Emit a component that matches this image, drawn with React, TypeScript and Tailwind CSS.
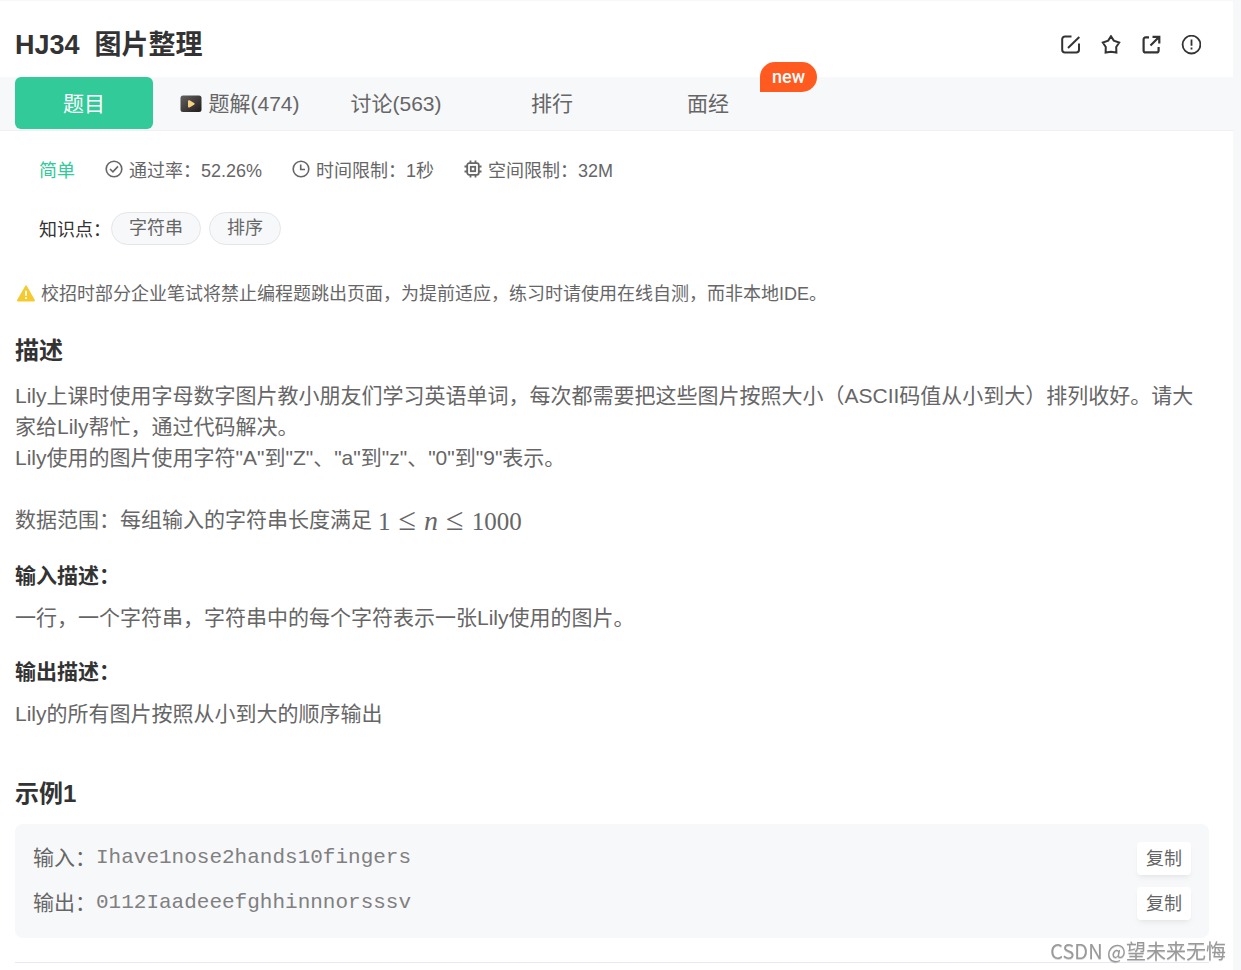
import React, { useState } from 'react';

const tabs = [
  { id: 'question', label: '题目' },
  { id: 'solution', label: '题解(474)', video: true },
  { id: 'discuss', label: '讨论(563)' },
  { id: 'rank', label: '排行' },
  { id: 'interview', label: '面经', badge: 'new' },
];

const samples = [
  { label: '输入：', value: 'Ihave1nose2hands10fingers' },
  { label: '输出：', value: '0112Iaadeeefghhinnnorsssv' },
];

const tags = ['字符串', '排序'];

function EditIcon() {
  return (
    <svg viewBox="0 0 20 20" className="size-5" fill="none" stroke="currentColor" strokeWidth="2">
      <path d="M10.5 1.5H4A2.8 2.8 0 0 0 1.2 4.3V14.7A2.8 2.8 0 0 0 4 17.5H15.2A2.8 2.8 0 0 0 18 14.7V8.5" />
      <path d="M7 13L18.3 2" />
    </svg>
  );
}

function StarIcon() {
  return (
    <svg viewBox="0 0 20 20" className="size-5" fill="none" stroke="currentColor" strokeWidth="2">
      <path d="M10 1.2L12.8 5.6L18.2 7.5L15.2 12L15.4 17.6L10 16.7L4.6 17.6L4.8 12L1.8 7.5L7.2 5.6Z" />
    </svg>
  );
}

function ShareIcon() {
  return (
    <svg viewBox="0 0 20 20" className="size-5" fill="none" stroke="currentColor" strokeWidth="2.2">
      <path d="M8 2.4H4.6A2 2 0 0 0 2.6 4.4V15.4A2 2 0 0 0 4.6 17.4H15.6A2 2 0 0 0 17.6 15.4V12" />
      <path d="M11.5 1.8H18.3V8.6M18 2L9.5 10.5" />
    </svg>
  );
}

function WarnCircleIcon() {
  return (
    <svg viewBox="0 0 20 20" className="size-5" fill="none" stroke="currentColor" strokeWidth="1.8">
      <circle cx="10.5" cy="9.6" r="8.9" />
      <path d="M10.5 4.6V10.8M10.5 12.6V14.4" />
    </svg>
  );
}

function VideoIcon() {
  return (
    <svg viewBox="0 0 22 18" className="w-[22px] h-[18px]">
      <defs>
        <linearGradient id="video" x1="0" y1="0" x2="1" y2="1">
          <stop offset="0" stopColor="#646260" />
          <stop offset="1" stopColor="#1f1b1a" />
        </linearGradient>
      </defs>
      <rect x="0.5" y="0.5" width="21" height="16.5" rx="2.5" fill="url(#video)" />
      <path d="M8 6.2a1 1 0 0 1 1.5-.9l4.6 2.7a1 1 0 0 1 0 1.7l-4.6 2.7a1 1 0 0 1-1.5-.9z" fill="#f8cf83" />
    </svg>
  );
}

function PassIcon() {
  return (
    <svg viewBox="0 0 18 18" className="size-[18px]" fill="none" stroke="currentColor" strokeWidth="1.6">
      <circle cx="9" cy="9" r="7.8" />
      <path d="M5 9L7.9 11.8L13 6.4" />
    </svg>
  );
}

function ClockIcon() {
  return (
    <svg viewBox="0 0 18 18" className="size-[18px]" fill="none" stroke="currentColor" strokeWidth="1.6">
      <circle cx="9" cy="9" r="7.8" />
      <path d="M8.7 4.5V9.5H13" />
    </svg>
  );
}

function ChipIcon() {
  return (
    <svg viewBox="0 0 18 18" className="size-[18px]" fill="none" stroke="currentColor" strokeWidth="1.8">
      <rect x="3.2" y="3.2" width="11.6" height="11.6" rx="2" />
      <rect x="6.8" y="6.8" width="4.4" height="4.4" />
      <path d="M6.5 0.5V3M11.5 0.5V3M6.5 15V17.5M11.5 15V17.5M0.5 6.5H3M0.5 11.5H3M15 6.5H17.5M15 11.5H17.5" />
    </svg>
  );
}

function TipIcon() {
  return (
    <svg viewBox="0 0 20 18" className="w-5 h-[18px]">
      <path d="M10.2 1a1 1 0 0 1 1.7 0L19.8 15a1 1 0 0 1-.9 1.5H3a1 1 0 0 1-.9-1.5z" fill="#f5ca2f" />
      <path d="M11 5.8V10.8M11 12.2V14" stroke="#fff" strokeWidth="1.8" />
    </svg>
  );
}

const actions = [
  { label: '笔记', Icon: EditIcon },
  { label: '收藏', Icon: StarIcon },
  { label: '分享', Icon: ShareIcon },
  { label: '反馈', Icon: WarnCircleIcon },
];

const metas = [
  { text: '通过率：52.26%', Icon: PassIcon },
  { text: '时间限制：1秒', Icon: ClockIcon },
  { text: '空间限制：32M', Icon: ChipIcon },
];

export default function App() {
  const [activeTab, setActiveTab] = useState('question');

  const copy = (value: string) => {
    navigator.clipboard?.writeText(value).catch(() => {});
  };

  return (
    <div className="min-h-screen bg-[#f7f8fa] pt-px pr-2 text-[#666] font-['Liberation_Sans','Noto_Sans_CJK_SC',sans-serif]">
      <main lang="zh-CN" className="min-h-screen bg-white">
        <header className="flex items-center justify-between h-19 pt-3 pl-[15px] pr-8 text-[#333]">
          <h1 className="text-[27px] leading-9 font-bold whitespace-pre">HJ34  图片整理</h1>
          <div className="flex gap-5">
            {actions.map(({ label, Icon }) => (
              <button key={label} aria-label={label} className="cursor-pointer"><Icon /></button>
            ))}
          </div>
        </header>

        <nav className="flex gap-[18px] h-[54px] pl-[15px] bg-[#f7f8fa] border-b border-[#f0f0f2]">
          {tabs.map(tab => (
            <button
              key={tab.id}
              onClick={() => setActiveTab(tab.id)}
              className={`relative flex items-center justify-center gap-1.5 w-[138px] h-[52px] pt-0.5 rounded-md text-[21px] cursor-pointer ${activeTab === tab.id ? 'bg-[#32ca99] text-white' : 'text-[#666]'}`}
            >
              {tab.video && <VideoIcon />}
              {tab.label}
              {tab.badge && (
                <span className="absolute -top-[15px] left-[121px] h-[30px] px-3 rounded-full rounded-bl-none bg-[#ff5a1f] text-white text-lg leading-[30px] font-medium font-['Roboto',sans-serif]">{tab.badge}</span>
              )}
            </button>
          ))}
        </nav>

        <section className="pl-[39px] pt-[26px] text-lg leading-7">
          <div className="flex items-center gap-[30px]">
            <span className="text-[#32ca99]">简单</span>
            {metas.map(({ text, Icon }) => (
              <span key={text} className="flex items-start gap-1.5"><span className="pt-[3px]"><Icon /></span>{text}</span>
            ))}
          </div>
          <div className="flex items-start mt-[27px]">
            <span className="pt-1 text-[#333]">知识点：</span>
            <div className="flex gap-2">
              {tags.map(tag => (
                <a key={tag} href="#" className="h-[33px] px-[17px] rounded-full border border-[#e3e5e8] bg-[#f7f8fa] leading-[30px]">{tag}</a>
              ))}
            </div>
          </div>
        </section>

        <article className="pl-[15px] pr-6 pt-[35px] text-[21px] leading-[31px]">
          <p className="flex items-center gap-1.5 text-lg leading-7"><TipIcon />校招时部分企业笔试将禁止编程题跳出页面，为提前适应，练习时请使用在线自测，而非本地IDE。</p>

          <h2 className="mt-[25px] text-2xl leading-9 font-bold text-[#333]">描述</h2>
          <p className="mt-[11px]">
            Lily上课时使用字母数字图片教小朋友们学习英语单词，每次都需要把这些图片按照大小（ASCII码值从小到大）排列收好。请大家给Lily帮忙，通过代码解决。<br />
            Lily使用的图片使用字符"A"到"Z"、"a"到"z"、"0"到"9"表示。
          </p>
          <p className="flex items-center gap-1.5 mt-[31px]">
            数据范围：每组输入的字符串长度满足
            <span className="flex items-baseline gap-2 h-[31px] text-[25px] leading-[31px] font-['Liberation_Serif',serif]">
              <span>1</span>
              <span className="text-[32px]">≤</span>
              <i className="text-[28px]">n</i>
              <span className="text-[32px]">≤</span>
              <span>1000</span>
            </span>
          </p>

          <h3 className="mt-[25px] font-bold text-[#333]">输入描述：</h3>
          <p className="mt-[11px]">一行，一个字符串，字符串中的每个字符表示一张Lily使用的图片。</p>
          <h3 className="mt-[23px] font-bold text-[#333]">输出描述：</h3>
          <p className="mt-[11px]">Lily的所有图片按照从小到大的顺序输出</p>

          <h2 className="mt-[47px] text-2xl leading-9 font-bold text-[#333]">示例1</h2>
          <div className="flex flex-col gap-3 mt-3 px-[18px] py-[18px] rounded-lg bg-[#f7f8fa]">
            {samples.map(s => (
              <div key={s.label} className="flex items-start">
                <span>{s.label}</span>
                <code className="flex-1 text-[#808080] font-['Liberation_Mono',monospace]">{s.value}</code>
                <button onClick={() => copy(s.value)} className="h-[33px] px-[9px] rounded bg-white text-lg leading-[30px] shadow-md shadow-black/5 cursor-pointer">复制</button>
              </div>
            ))}
          </div>
          <hr className="mt-6 border-[#e8e8f2]" />
        </article>
      </main>

      <div className="fixed right-[15px] bottom-1 text-xl leading-[30px] text-[#999] text-shadow-2xs font-['Noto_Sans_CJK_SC',sans-serif]">CSDN @望未来无悔</div>
    </div>
  );
}
